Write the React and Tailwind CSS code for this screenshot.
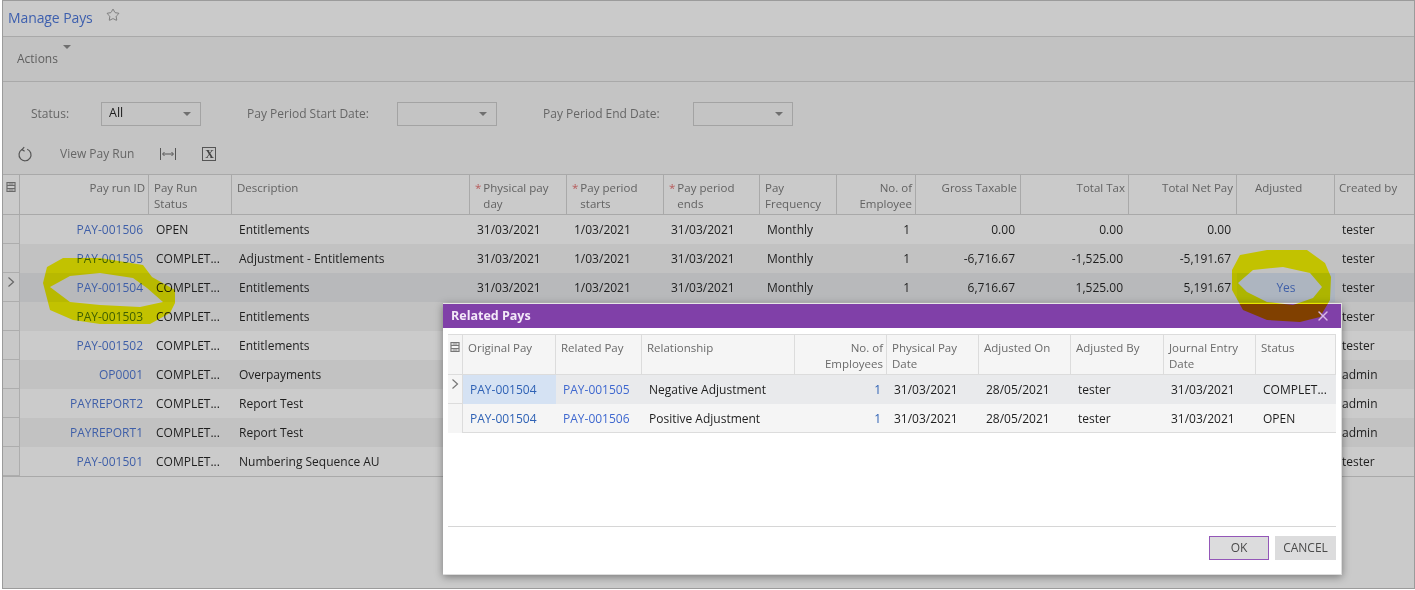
import React from "react";
import { Star, X } from "lucide-react";

const mainCols = "grid grid-cols-[17px_129px_83px_238px_97px_97px_96px_77px_79px_105px_108px_108px_98px_80px]";
const modalCols = "grid grid-cols-[15px_93px_86px_153px_92px_92px_92px_93px_92px_80px]";

const rows = [
  ["PAY-001506", "OPEN", "Entitlements", "31/03/2021", "1/03/2021", "31/03/2021", "Monthly", "1", "0.00", "0.00", "0.00", "", "tester"],
  ["PAY-001505", "COMPLET...", "Adjustment - Entitlements", "31/03/2021", "1/03/2021", "31/03/2021", "Monthly", "1", "-6,716.67", "-1,525.00", "-5,191.67", "", "tester"],
  ["PAY-001504", "COMPLET...", "Entitlements", "31/03/2021", "1/03/2021", "31/03/2021", "Monthly", "1", "6,716.67", "1,525.00", "5,191.67", "Yes", "tester"],
  ["PAY-001503", "COMPLET...", "Entitlements", "", "", "", "", "", "", "", "", "", "tester"],
  ["PAY-001502", "COMPLET...", "Entitlements", "", "", "", "", "", "", "", "", "", "tester"],
  ["OP0001", "COMPLET...", "Overpayments", "", "", "", "", "", "", "", "", "", "admin"],
  ["PAYREPORT2", "COMPLET...", "Report Test", "", "", "", "", "", "", "", "", "", "admin"],
  ["PAYREPORT1", "COMPLET...", "Report Test", "", "", "", "", "", "", "", "", "", "admin"],
  ["PAY-001501", "COMPLET...", "Numbering Sequence AU", "", "", "", "", "", "", "", "", "", "tester"],
];

const modalRows = [
  ["PAY-001504", "PAY-001505", "Negative Adjustment", "1", "31/03/2021", "28/05/2021", "tester", "31/03/2021", "COMPLET..."],
  ["PAY-001504", "PAY-001506", "Positive Adjustment", "1", "31/03/2021", "28/05/2021", "tester", "31/03/2021", "OPEN"],
];

function Handle({ color }) {
  return (
    <svg width="12" height="12" viewBox="0 0 12 12" fill="none" stroke={color} strokeWidth="1.2">
      <path d="M2 1.5h8v9H2z" />
      <path d="M2 4.5h8M2 7.5h8" />
      <path d="M3.5 3h5M3.5 9h5" />
    </svg>
  );
}

function Caret({ color = "border-t-[#6f6f6f]" }) {
  return <span className={`h-0 w-0 border-x-[4px] border-t-[4px] border-x-transparent ${color}`} />;
}

function Select({ value, w }) {
  return (
    <div className={`flex h-6 items-center justify-between border border-[#a3a3a3] pl-[7px] pr-[9px] ${w}`}>
      <span className="text-[12.5px] text-[#1d1d1d]">{value}</span>
      <Caret />
    </div>
  );
}

function HeaderCell({ children, right, req }) {
  return (
    <div className={`flex border-r border-[#a9a9a9] pl-[5px] pr-[3px] pt-[5px] leading-4 ${right ? "justify-end text-right" : ""}`}>
      {req && <span className="mr-[2px] text-[#b75a5a]">*</span>}
      <span>{children}</span>
    </div>
  );
}

function MainHeader() {
  const heads = [
    ["Pay run ID", true], ["Pay Run Status"], ["Description"], ["Physical pay day", false, true],
    ["Pay period starts", false, true], ["Pay period ends", false, true], ["Pay Frequency"],
    ["No. of Employee", true], ["Gross Taxable", true], ["Total Tax", true], ["Total Net Pay", true],
  ];
  return (
    <div className={`${mainCols} h-[41px] border-y border-[#a9a9a9] text-[11.5px] text-[#626262]`}>
      <div className="flex justify-center border-r border-[#a9a9a9] pt-[6px]"><Handle color="#6a6a6a" /></div>
      {heads.map(([t, r, q]) => <HeaderCell key={t} right={r} req={q}>{t}</HeaderCell>)}
      <div className="border-r border-[#a9a9a9] pt-[5px] pl-[18px] leading-4">Adjusted</div>
      <div className="pl-[4px] pt-[5px] leading-4">Created by</div>
    </div>
  );
}

function MainRow({ r, i }) {
  const active = i === 2;
  const bg = active ? "bg-[#b8b9bb]" : i % 2 === 0 ? "bg-[#cbcbcb]" : "bg-[#c2c2c2]";
  const plain = "truncate pl-[7px]";
  const num = "pr-[6px] text-right";
  return (
    <div className={`${mainCols} h-[29px] items-center text-[12px] leading-[29px] text-[#1e1e1e] ${bg}`}>
      <div className="flex h-full items-start justify-center border-b border-r border-[#adadad] bg-[#c8c8c8] pt-[3px] text-[#666666]">
        {active && (
          <svg width="8" height="12" viewBox="0 0 8 12" fill="none" stroke="#666666" strokeWidth="1.2"><path d="M1.5 1.5 6.5 6l-5 4.5" /></svg>
        )}
      </div>
      <div className={`${num} text-[#3f5fa8]`}>{r[0]}</div>
      <div className={plain}>{r[1]}</div>
      <div className={plain}>{r[2]}</div>
      <div className={plain}>{r[3]}</div>
      <div className={plain}>{r[4]}</div>
      <div className={plain}>{r[5]}</div>
      <div className={plain}>{r[6]}</div>
      <div className={num}>{r[7]}</div>
      <div className={num}>{r[8]}</div>
      <div className={num}>{r[9]}</div>
      <div className={num}>{r[10]}</div>
      <div className={`h-full text-center text-[#3f5fa8] ${active ? "bg-[#adb5c0]" : ""}`}>{r[11]}</div>
      <div className={plain}>{r[12]}</div>
    </div>
  );
}

function Modal() {
  const heads = [
    ["Original Pay"], ["Related Pay"], ["Relationship"], ["No. of Employees", true], ["Physical Pay Date"],
    ["Adjusted On"], ["Adjusted By"], ["Journal Entry Date"],
  ];
  return (
    <div className="absolute left-[443px] top-[303px] flex h-[272px] w-[899px] flex-col border-r border-b border-[#dddddd] border-t border-t-[#e6e6e6] bg-white shadow-[0_2px_8px_rgba(0,0,0,0.4)]">
      <div className="flex h-6 items-center bg-[#8040a8] pl-2 text-[12.5px] font-bold text-[#f3e9f8]">Related Pays</div>
      <div className="mx-[5px] mt-[6px] w-[888px] flex-1">
        <div className={`${modalCols} h-[41px] border-y border-[#dcdcdc] bg-[#f5f5f5] text-[11.5px] text-[#6a6a6a]`}>
          <div className="flex justify-center border-r border-[#dcdcdc] pt-[6px]"><Handle color="#777777" /></div>
          {heads.map(([t, r]) => (
            <div key={t} className={`border-r border-[#dcdcdc] pl-[5px] pr-[3px] pt-[5px] leading-4 ${r ? "text-right" : ""}`}>{t}</div>
          ))}
          <div className="border-r border-[#dcdcdc] pl-[5px] pt-[5px] leading-4">Status</div>
        </div>
        {modalRows.map((r, i) => (
          <div key={i} className={`${modalCols} h-[29px] text-[12px] leading-[29px] text-[#1e1e1e] ${i === 0 ? "bg-[#e9eaec]" : "bg-[#f5f5f5] border-b border-[#dcdcdc]"}`}>
            <div className={`flex items-start justify-center border-r border-[#dcdcdc] bg-[#f5f5f5] pt-[3px] ${i === 0 ? "border-b" : ""}`}>
              {i === 0 && <svg width="8" height="12" viewBox="0 0 8 12" fill="none" stroke="#777777" strokeWidth="1.2"><path d="M1.5 1.5 6.5 6l-5 4.5" /></svg>}
            </div>
            <div className={`pl-[7px] text-[#2f62b5] ${i === 0 ? "bg-[#d5e2f3]" : ""}`}>{r[0]}</div>
            <div className="pl-[7px] text-[#3f68cf]">{r[1]}</div>
            <div className="pl-[7px]">{r[2]}</div>
            <div className="pr-[6px] text-right text-[#2f62b5]">{r[3]}</div>
            <div className="pl-[7px]">{r[4]}</div>
            <div className="pl-[7px]">{r[5]}</div>
            <div className="pl-[7px]">{r[6]}</div>
            <div className="pl-[7px]">{r[7]}</div>
            <div className="truncate pl-[7px]">{r[8]}</div>
          </div>
        ))}
      </div>
      <div className="mx-[5px] flex h-[48px] justify-end gap-[6px] border-t border-[#d6d6d6] pt-[9px]">
        <button className="h-6 w-[60px] border border-[#9457b8] bg-[#dcdcdd] text-[12px] text-[#4a4a4a]">OK</button>
        <button className="h-6 w-[61px] bg-[#dcdcdd] text-[12px] text-[#4a4a4a]">CANCEL</button>
      </div>
    </div>
  );
}

export default function App() {
  return (
    <div className="relative h-[590px] w-[1415px] overflow-hidden bg-white font-['Open_Sans',sans-serif] text-[12px]">
      <div className="ml-[2px] flex h-[589px] w-[1413px] flex-col border-x border-t border-b border-[#9b9b9b] bg-[#cacaca]">
        <div className="flex h-[35px] items-center gap-[13px] pl-[5px] pb-[2px]">
          <span className="text-[14px] tracking-[-0.1px] text-[#3d5fae]">Manage Pays</span>
          <Star size={14} strokeWidth={1.2} className="mb-[5px] text-[#5d5d5d]" />
        </div>
        <div className="flex h-[46px] items-center gap-[5px] border-y border-[#a9a9a9] bg-[#c2c2c2] pl-[14px] text-[12px] text-[#5f5f5f]">
          <span>Actions</span>
          <span className="mb-[3px]"><Caret /></span>
        </div>
        <div className="flex h-[52px] items-center bg-[#c4c4c4] pt-[11px] text-[12px] text-[#666666]">
          <span className="ml-[28px] w-[70px]">Status:</span>
          <Select value="All" w="w-[100px]" />
          <span className="ml-[46px] w-[150px]">Pay Period Start Date:</span>
          <Select value="" w="w-[100px]" />
          <span className="ml-[46px] w-[150px]">Pay Period End Date:</span>
          <Select value="" w="w-[100px]" />
        </div>
        <div className="flex h-[40px] items-center bg-[#c4c4c4] text-[12px] text-[#666666]">
          <svg className="ml-[14px]" width="16" height="16" viewBox="0 0 16 16" fill="none" stroke="#555555" strokeWidth="1.2">
            <path d="M5 3.6a6 6 0 1 0 5.2-.4" />
            <path d="M7.2 1.2 5 3.6l2.6 1.6" />
          </svg>
          <span className="ml-[27px]">View Pay Run</span>
          <svg className="ml-[25px]" width="18" height="14" viewBox="0 0 18 14" fill="none" stroke="#555555" strokeWidth="1">
            <path d="M1.5 1v12M16.5 1v12M4 7h10" />
            <path d="m5.5 5-2 2 2 2M12.5 5l2 2-2 2" />
          </svg>
          <span className="ml-[25px] flex h-[14px] w-[14px] items-center justify-center border border-[#555555] font-['Liberation_Serif',serif] text-[12px] leading-none font-bold text-[#444444]">X</span>
        </div>
        <MainHeader />
        {rows.map((r, i) => <MainRow key={r[0]} r={r} i={i} />)}
        <div className="flex-1 border-t border-[#a9a9a9]" />
      </div>

      <Modal />

      <svg className="absolute left-0 top-0 z-10 mix-blend-multiply" width="1415" height="590" viewBox="0 0 1415 590" fill="#ffff00" fillRule="evenodd">
        <path d="M43 283 47 267 63 258 100 258 143 265 152 277 175 290 175 303 170 313 150 324 100 324 73 320 50 310ZM50 287 70 276 100 273 133 278 147 288 163 302 140 307 100 305 70 302Z" />
        <path d="M1232 270 1240 255 1267 250 1307 250 1325 263 1331 277 1330 300 1320 317 1300 322 1267 320 1243 310 1232 290ZM1238 283 1253 270 1283 267 1310 273 1322 287 1313 298 1293 305 1267 302 1247 292Z" />
      </svg>

      <X size={16} strokeWidth={2} className="absolute left-[1315px] top-[308px] z-20 text-[#d9b8e6]" />
    </div>
  );
}
